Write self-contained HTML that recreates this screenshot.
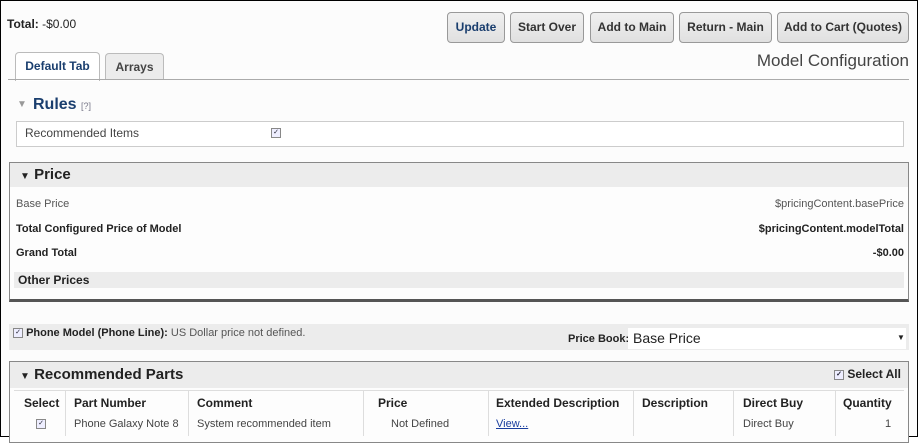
<!DOCTYPE html>
<html><head><style>
body{margin:0;width:918px;height:437px;overflow:hidden;background:#fff;font-family:"Liberation Sans Narrow","Liberation Sans",sans-serif;color:#222;position:relative}
.a{position:absolute;white-space:nowrap}
#frame{position:absolute;left:0;top:0;width:916px;height:435px;border:1px solid #000;border-right:2px solid #000;background:#fcfcfc}
.btn{position:absolute;top:12px;height:29px;border:1px solid #999;border-radius:4px;background:linear-gradient(#f0f0f0,#e0e0e0);font:bold 12px "Liberation Sans",sans-serif;color:#333;text-align:center;line-height:29px}
.tab{position:absolute;border:1px solid #bbb;border-bottom:none;border-radius:4px 4px 0 0;font:bold 12px "Liberation Sans",sans-serif;text-align:center;line-height:27px}
.box{position:absolute;border:1px solid #999}
.cb{display:inline-block;width:8px;height:8px;border:1px solid #888;background:#eef;font-size:7px;line-height:8px;text-align:center;color:#223;vertical-align:middle}
.th{position:absolute;top:396px;font-weight:bold;font-size:12px}
.td{position:absolute;top:418px;font-size:11px;color:#444}
.vl{position:absolute;top:390px;height:46px;border-left:1px solid #ddd}
</style></head><body>
<div id="frame"></div>
<div class="a" style="left:7px;top:17px;font:12px 'Liberation Sans',sans-serif"><b>Total:</b> -$0.00</div>
<div class="btn" style="left:447px;width:56px;color:#1a3e6e">Update</div>
<div class="btn" style="left:510px;width:72px">Start Over</div>
<div class="btn" style="left:590px;width:82px">Add to Main</div>
<div class="btn" style="left:679px;width:91px">Return - Main</div>
<div class="btn" style="left:777px;width:130px">Add to Cart (Quotes)</div>
<div class="tab" style="left:15px;top:52px;width:83px;height:28px;background:#fff;color:#1a3e6e">Default Tab</div>
<div class="tab" style="left:105px;top:53px;width:57px;height:26px;background:#ececec;color:#444">Arrays</div>
<div class="a" style="left:8px;top:79px;width:901px;border-top:1px solid #aaa"></div>
<div class="a" style="right:9px;top:51px;font:17px 'Liberation Sans',sans-serif;color:#444">Model Configuration</div>
<div class="a" style="left:17px;top:99px;font-size:10px;color:#999">▼</div>
<div class="a" style="left:33px;top:96px;font:bold 16px 'Liberation Sans',sans-serif;color:#1a3e6e">Rules <span style="font-size:9px;font-weight:normal;color:#778">[?]</span></div>
<div class="box" style="left:16px;top:121px;width:886px;height:24px;border-color:#ccc;background:#fff"></div>
<div class="a" style="left:25px;top:126px;font:12px 'Liberation Sans',sans-serif;color:#444">Recommended Items</div>
<div class="a" style="left:271px;top:124px"><span class="cb">✓</span></div>
<!-- price -->
<div class="box" style="left:9px;top:162px;width:898px;height:136px;border:1px solid #888;border-bottom:3px solid #555;background:#fdfdfd"></div>
<div class="a" style="left:10px;top:163px;width:898px;height:24px;background:#ececec"></div>
<div class="a" style="left:20px;top:166px;font-size:15px;font-weight:bold"><span style="font-size:10px">▼</span> Price</div>
<div class="a" style="left:16px;top:198px;font-size:11px;color:#555">Base Price</div>
<div class="a" style="right:14px;top:198px;font-size:11px;color:#555">$pricingContent.basePrice</div>
<div class="a" style="left:16px;top:223px;font-size:11px;font-weight:bold">Total Configured Price of Model</div>
<div class="a" style="right:14px;top:223px;font-size:11px;font-weight:bold">$pricingContent.modelTotal</div>
<div class="a" style="left:16px;top:247px;font-size:11px;font-weight:bold">Grand Total</div>
<div class="a" style="right:14px;top:247px;font-size:11px;font-weight:bold">-$0.00</div>
<div class="a" style="left:14px;top:272px;width:890px;height:16px;background:#ececec"></div>
<div class="a" style="left:18px;top:273px;font-size:12px;font-weight:bold">Other Prices</div>
<!-- phone model -->
<div class="a" style="left:9px;top:324px;width:900px;height:26px;background:#ececec"></div>
<div class="a" style="left:13px;top:327px;font-size:11px"><span class="cb">✓</span> <b>Phone Model (Phone Line):</b> <span style="color:#555">US Dollar price not defined.</span></div>
<div class="a" style="left:568px;top:333px;font-size:11px;font-weight:bold">Price Book:</div>
<div class="a" style="left:628px;top:328px;width:278px;height:21px;background:#fff"></div>
<div class="a" style="left:633px;top:330px;font-size:14px">Base Price</div>
<div class="a" style="left:897px;top:333px;font-size:8px">▼</div>
<!-- recommended parts -->
<div class="box" style="left:9px;top:361px;width:898px;height:80px;border-color:#888;background:#fdfdfd"></div>
<div class="a" style="left:10px;top:362px;width:898px;height:26px;background:#ececec"></div>
<div class="a" style="left:20px;top:366px;font-size:15px;font-weight:bold"><span style="font-size:10px">▼</span> Recommended Parts</div>
<div class="a" style="left:834px;top:367px;font-size:12px;font-weight:bold"><span class="cb">✓</span> Select All</div>
<div class="a" style="left:14px;top:390px;width:890px;border-top:1px solid #ddd"></div>
<div class="vl" style="left:65px"></div><div class="vl" style="left:188px"></div><div class="vl" style="left:363px"></div><div class="vl" style="left:488px"></div><div class="vl" style="left:633px"></div><div class="vl" style="left:733px"></div><div class="vl" style="left:835px"></div>
<div class="th" style="left:24px">Select</div>
<div class="th" style="left:74px">Part Number</div>
<div class="th" style="left:197px">Comment</div>
<div class="th" style="left:378px">Price</div>
<div class="th" style="left:496px">Extended Description</div>
<div class="th" style="left:642px">Description</div>
<div class="th" style="left:743px">Direct Buy</div>
<div class="th" style="left:843px">Quantity</div>
<div class="td" style="left:36px"><span class="cb">✓</span></div>
<div class="td" style="left:74px">Phone Galaxy Note 8</div>
<div class="td" style="left:197px">System recommended item</div>
<div class="td" style="left:391px">Not Defined</div>
<div class="td" style="left:496px;color:#1a3e9e;text-decoration:underline">View...</div>
<div class="td" style="left:743px">Direct Buy</div>
<div class="td" style="left:885px">1</div>
</body></html>
